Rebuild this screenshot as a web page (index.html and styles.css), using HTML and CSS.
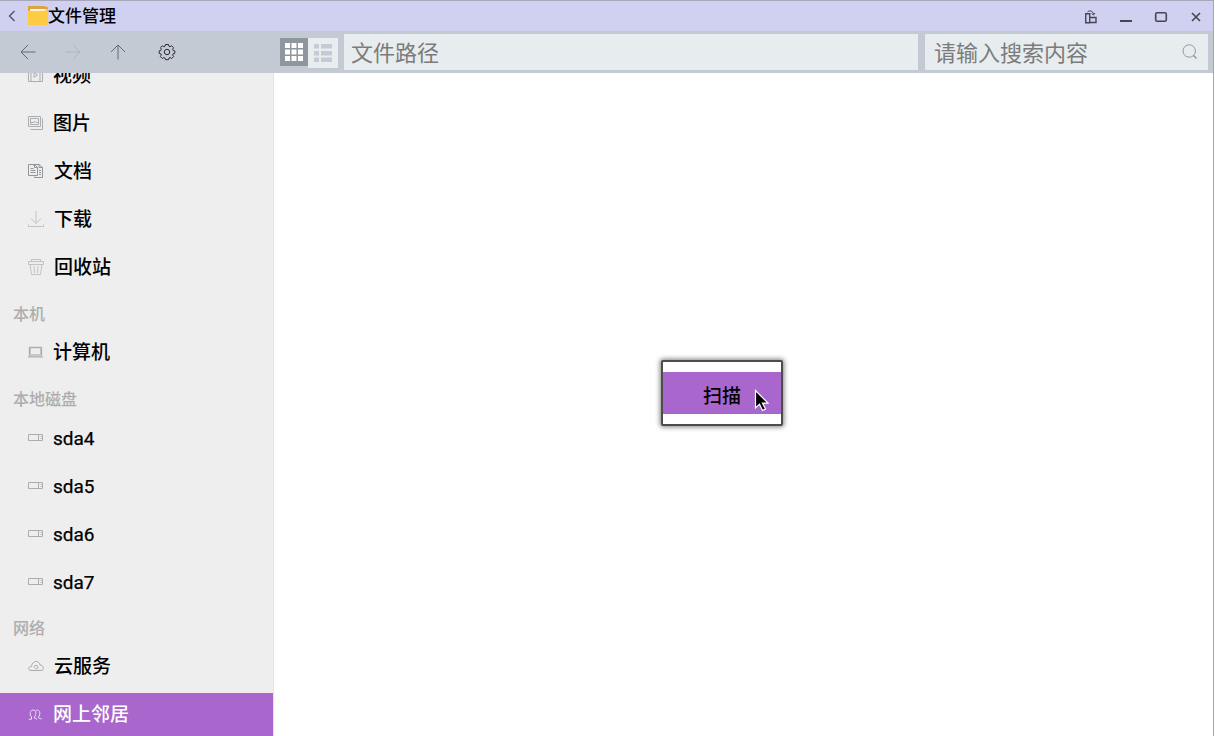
FILE: index.html
```html
<!DOCTYPE html>
<html lang="zh-CN">
<head>
<meta charset="utf-8">
<title>文件管理</title>
<link rel="stylesheet" href="styles.css">
</head>
<body>
<div class="window">
  <header class="titlebar">
    <svg class="back" width="8" height="12" viewBox="0 0 8 12"><path d="M6.500 1L1.500 6L6.500 11"/></svg>
    <svg class="folder" width="20" height="20" viewBox="0 0 20 20"><path fill="#e0a23c" d="M0 0h17l1 1h2v6H0z"/><path fill="#fecb43" d="M0 5h17l2-2h1v16H0z"/><path fill="#fff8df" d="M2 3h16v1l-2 1H2z"/></svg>
    <h1 class="title">文件管理</h1>
    <div class="controls">
      <svg width="14" height="14" viewBox="0 0 14 14"><path d="M1.700 3.700h4v9h-4zM5.700 7.500h6.300v5H5.700" stroke-width="1.400"/><path d="M3.500 2C5 .2 9.300.5 9.500 4.500M7.500 3.500l2 1.500 1.500-2" stroke-width="1"/></svg>
      <svg width="14" height="14" viewBox="0 0 14 14"><path d="M1 11h12" stroke-width="2"/></svg>
      <svg width="14" height="14" viewBox="0 0 14 14"><rect x="1.700" y="2.700" width="10.600" height="8.600" rx="1.500" stroke-width="1.600"/></svg>
      <svg width="14" height="14" viewBox="0 0 14 14"><path d="M3 3l8 8M11 3l-8 8" stroke-width="1.600"/></svg>
    </div>
  </header>
  <div class="toolbar">
    <nav class="nav">
      <svg width="16" height="16" viewBox="0 0 16 16"><path d="M15.500 8H1M8 1L1 8l7 7"/></svg>
      <svg class="disabled" width="16" height="16" viewBox="0 0 16 16"><path d="M.5 8H15M8 1l7 7-7 7"/></svg>
      <svg width="16" height="16" viewBox="0 0 16 16"><path d="M8 15.500V1M1 8l7-7 7 7"/></svg>
      <svg class="gear" width="18" height="18" viewBox="0 0 18 18"><path d="M7.500 1.500h3l.4 1.700 1.200.5 1.600-.9 1.900 1.900-.9 1.600.5 1.200 1.600.4v2.500l-1.600.4-.5 1.300.9 1.500-1.900 1.900-1.600-.9-1.200.5-.4 1.600h-3l-.4-1.600-1.200-.5-1.600.9-1.900-1.900.9-1.500-.5-1.300-1.600-.4V7.900l1.600-.4.5-1.200-.9-1.600 1.900-1.900 1.600.9 1.200-.5z"/><circle cx="9" cy="9" r="2.700"/></svg>
    </nav>
    <div class="views">
      <div class="view view-grid"><svg width="18" height="18" viewBox="0 0 18 18"><path d="M0 0h5v5H0zM6.500 0h5v5h-5zM13 0h5v5h-5zM0 6.500h5v5H0zM6.500 6.500h5v5h-5zM13 6.500h5v5h-5zM0 13h5v5H0zM6.500 13h5v5h-5zM13 13h5v5h-5z"/></svg></div>
      <div class="view view-list"><svg width="18" height="18" viewBox="0 0 18 18"><path d="M0 0h5v4.500H0zM7 0h11v4.500H7zM0 7h5v4.500H0zM7 7h11v4.500H7zM0 13.500h5V18H0zM7 13.500h11V18H7z"/></svg></div>
    </div>
    <div class="field path"><span>文件路径</span></div>
    <div class="field search"><span>请输入搜索内容</span>
      <svg width="16" height="16" viewBox="0 0 16 16"><circle cx="7.200" cy="7" r="6.200"/><path d="M11.500 11.500l3 3" stroke-width="1.600"/></svg>
    </div>
  </div>
  <div class="body">
    <aside class="sidebar">
      <div class="list">
        <div class="item"><svg viewBox="0 0 16 16"><path d="M.5 1.500h14v13H.5zM3 1.500v13M12 1.500v13M6 5.500v5l3.500-2.500z"/></svg><span>视频</span></div>
        <div class="item"><svg viewBox="0 0 16 16"><path d="M.5 1.500h12v10H.5zM2.500 3.500h8v6h-8zM3 7.500h2l2-1 1.500 1H10M2.500 14.500h12V3.500"/></svg><span>图片</span></div>
        <div class="item"><svg class="dark" viewBox="0 0 16 16"><path d="M5.500 2.500v-1H11l3.500 3v10h-8v-1M.5 1.500h6l3 3v8h-9zM6.500 1.500v3h3M2.500 5.500h3M2.500 7.500h5M2.500 9.500h5M11 1.500v3h3.500M11 7.500h2M11 9.500h2M11 11.500h2"/></svg><span class="nudge">文档</span></div>
        <div class="item"><svg class="light" viewBox="0 0 16 16"><path d="M8 0v12M3 7.500l5 5 5-5M.5 13.500v2h15v-2"/></svg><span class="nudge">下载</span></div>
        <div class="item"><svg class="light" viewBox="0 0 16 16"><path d="M3.500 2.500v-2h9v2M.5 5.500v-3h15v3zM2 5.500l1.500 10h9l1.500-10M6 7l.5 7M10 7l-.5 7"/></svg><span class="nudge">回收站</span></div>
        <h2 class="group">本机</h2>
        <div class="item"><svg viewBox="0 0 16 16"><path d="M1.500 3.500h12v8h-12zM2.500 4.500v6h10v-6"  stroke-opacity=".6"/><path d="M1.500 11.500v-8h12v8M0 12.800h15" stroke-width="1.300"/></svg><span>计算机</span></div>
        <h2 class="group group-disks">本地磁盘</h2>
        <div class="item disk"><svg viewBox="0 0 16 16"><path d="M.5 4.500h14v6H.5zM10.500 4.500v6M12.500 6.500h1M12.500 8.500h1"/></svg><span>sda4</span></div>
        <div class="item disk"><svg viewBox="0 0 16 16"><path d="M.5 4.500h14v6H.5zM10.500 4.500v6M12.500 6.500h1M12.500 8.500h1"/></svg><span>sda5</span></div>
        <div class="item disk"><svg viewBox="0 0 16 16"><path d="M.5 4.500h14v6H.5zM10.500 4.500v6M12.500 6.500h1M12.500 8.500h1"/></svg><span>sda6</span></div>
        <div class="item disk"><svg viewBox="0 0 16 16"><path d="M.5 4.500h14v6H.5zM10.500 4.500v6M12.500 6.500h1M12.500 8.500h1"/></svg><span>sda7</span></div>
        <h2 class="group group-network">网络</h2>
        <div class="item"><svg viewBox="0 0 16 16"><path d="M3 12.500C-.5 12.500 0 8 3.500 8.500 4 2.500 11 1.500 12 7c4 0 4.500 5.500 1 5.500zM6 9.500c0-3 4-2.500 4-.5 0 2.500-3 2.500-3 .5"/></svg><span class="nudge">云服务</span></div>
        <div class="item selected"><svg viewBox="0 0 16 16"><path d="M.8 13.200h2.700V11C1.500 9 1.500 4 5 4s3.500 4 1.500 7v1l2.700 1.200M7.500 4.700C11 2.500 13.500 7 10.500 11v.7l3.200 1.500"/></svg><span>网上邻居</span></div>
      </div>
    </aside>
    <main class="content">
      <div class="popup"><button class="scan">扫描</button></div>
      <svg class="cursor" width="15" height="24" viewBox="0 0 15 24"><path d="M1.500 1.500V19l4-3.700 3 6.200 3-1.400-3-6H14z"/></svg>
    </main>
  </div>
</div>
</body>
</html>
```
FILE: styles.css
```css
* { box-sizing: border-box; }
body {
  margin: 0;
  font-family: Roboto, "Noto Sans CJK SC", sans-serif;
  color: #000;
}
svg { display: block; flex: none; fill: none; stroke: #4d525d; }
.window {
  width: 1214px;
  height: 736px;
  display: flex;
  flex-direction: column;
  overflow: hidden;
  border-top: 1px solid #a6a6bb;
  border-right: 1px solid #a6a6ae;
  background: #fff;
}
.titlebar {
  flex: none;
  height: 30px;
  display: flex;
  align-items: center;
  padding: 0 10.500px 0 8px;
  background: #d0d0f0;
}
.back { margin-right: 12px; stroke-width: 1.300; }
.folder { stroke: none; }
.title { margin: 0; font-size: 17px; line-height: 24px; font-weight: 500; }
.controls { display: flex; gap: 21px; margin: 2px 0 0 auto; }
.controls svg { stroke: #454653; }
.toolbar {
  flex: none;
  height: 42px;
  display: flex;
  padding: 3px 5px 3px 0;
  background: #c3cad4;
}
.nav {
  width: 280px;
  display: flex;
  align-items: center;
  gap: 29px;
  padding-left: 20.400px;
}
.nav svg { stroke: #626a75; }
.nav .disabled { stroke: #adb5bf; }
.nav .gear { margin-left: 3px; stroke: #292d33; }
.views { display: flex; padding-top: 4px; }
.view { display: flex; align-items: center; justify-content: center; }
.view svg { stroke: none; }
.view-grid { width: 28px; height: 28px; background: #8f979e; }
.view-grid svg { fill: #fff; }
.view-list { width: 30px; height: 30px; background: #e8edf0; }
.view-list svg { fill: #c5cbd6; }
.field {
  display: flex;
  align-items: center;
  height: 36px;
  background: #e7ecef;
  color: #7b7b7b;
  font-size: 22px;
  line-height: 32px;
}
.field span { padding-top: 4px; }
.path { width: 574px; margin: 0 7px 0 6px; padding-left: 7px; }
.search { flex: 1; justify-content: space-between; padding: 0 10px 0 9px; }
.search svg { stroke: #92999d; }
.body { flex: 1; min-height: 0; display: flex; }
.sidebar {
  flex: none;
  width: 274px;
  overflow: hidden;
  background: #eee;
  border-right: 1px solid #e3e3e3;
}
.list { margin-top: -22px; }
.item {
  display: flex;
  align-items: center;
  height: 48px;
  padding-left: 28px;
  gap: 9px;
  font-size: 19px;
  line-height: 28px;
  font-weight: 500;
}
.item span { padding-top: 2px; }
.item svg { width: 16px; height: 16px; stroke: #aaaeb1; stroke-width: 1; }
.item .dark { stroke: #929699; }
.item .light { stroke: #c0c3c5; }
.item .nudge { padding-left: 1px; }
.disk { font-weight: 400; -webkit-text-stroke: .25px #000; }
.group {
  margin: 0;
  height: 37px;
  padding: 12px 0 0 13px;
  font-size: 16px;
  line-height: 24px;
  font-weight: 500;
  color: #adadad;
}
.group-disks { height: 38px; }
.group-network { height: 36px; padding-top: 11px; }
.selected {
  height: 44px;
  margin-top: 3px;
  padding-bottom: 2px;
  background: #a966cc;
  color: #fff;
}
.item.selected svg { stroke: #ecdcf5; }
.content {
  position: relative;
  flex: 1;
  display: flex;
  justify-content: center;
  align-items: flex-start;
  padding: 287px 43px 0 0;
}
.popup {
  width: 122px;
  height: 66px;
  padding: 10px 0;
  border: 2px solid #4c4c4c;
  border-radius: 2px;
  box-shadow: 0 0 5px 1px rgba(0, 0, 0, .5);
  background: #fff;
}
.scan {
  display: block;
  width: 100%;
  height: 42px;
  border: 0;
  padding: 2px 0 0;
  background: #a966cc;
  color: #000;
  font: inherit;
  font-size: 19px;
  font-weight: 500;
}
.cursor { position: absolute; left: 480px; top: 316px; fill: #000; stroke: #fff; stroke-width: 1.200; }
```
